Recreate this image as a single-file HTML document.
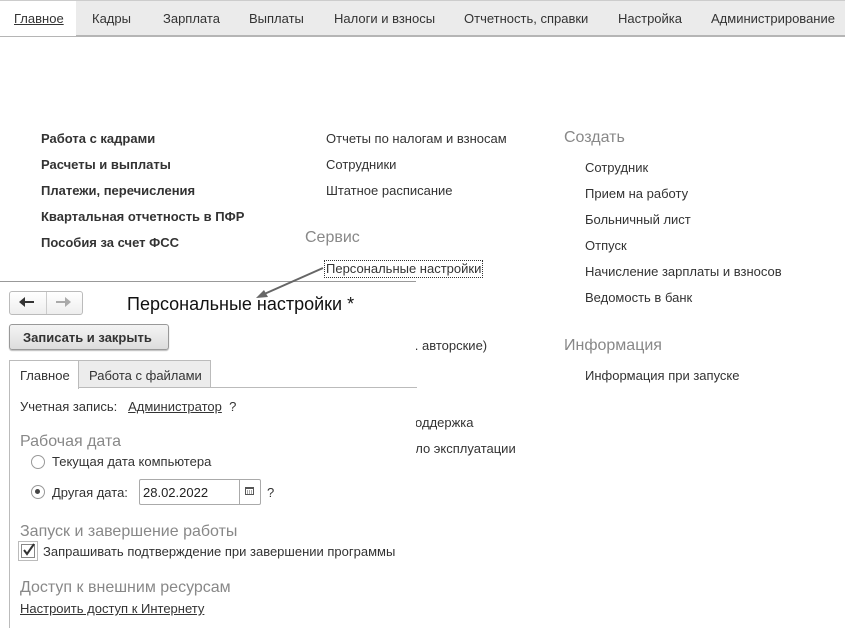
<!DOCTYPE html><html><head><meta charset="utf-8"><style>
body{margin:0;width:845px;height:627px;position:relative;background:#fff;font-family:"Liberation Sans",Arial,sans-serif;font-size:13px;color:#333;overflow:hidden}
.a{position:absolute;white-space:nowrap;line-height:16px;margin-top:1px}
.b{font-weight:bold;color:#333}
.h{font-size:16px;color:#888;line-height:20px}
.nav{position:absolute;left:0;top:0;width:845px;height:37px;background:#ebebeb;border-bottom:2px solid #b5b5b5;border-top:1px solid #ccc;box-sizing:border-box}
.nav span{position:absolute;top:10px;color:#333}
</style></head><body>
<div class="nav">
<div style="position:absolute;left:0;top:0;width:76px;height:35px;background:#fff"></div>
<span style="left:14px;text-decoration:underline">Главное</span>
<span style="left:92px">Кадры</span>
<span style="left:163px">Зарплата</span>
<span style="left:249px">Выплаты</span>
<span style="left:334px">Налоги и взносы</span>
<span style="left:464px">Отчетность, справки</span>
<span style="left:618px">Настройка</span>
<span style="left:711px">Администрирование</span>
</div>
<div class="a b" style="left:41px;top:130px">Работа с кадрами</div>
<div class="a b" style="left:41px;top:156px">Расчеты и выплаты</div>
<div class="a b" style="left:41px;top:182px">Платежи, перечисления</div>
<div class="a b" style="left:41px;top:208px">Квартальная отчетность в ПФР</div>
<div class="a b" style="left:41px;top:234px">Пособия за счет ФСС</div>
<div class="a" style="left:326px;top:130px">Отчеты по налогам и взносам</div>
<div class="a" style="left:326px;top:156px">Сотрудники</div>
<div class="a" style="left:326px;top:182px">Штатное расписание</div>
<div class="a h" style="left:305px;top:227px">Сервис</div>
<div class="a" style="left:324px;top:259px;border:1px dotted #333;padding:0 1px">Персональные настройки</div>
<div class="a" style="left:408px;top:337px">ч. авторские)</div>
<div class="a" style="left:408px;top:362px">я</div>
<div class="a" style="left:408px;top:414px">поддержка</div>
<div class="a" style="left:408px;top:440px">ало эксплуатации</div>
<div class="a h" style="left:564px;top:127px">Создать</div>
<div class="a" style="left:585px;top:159px">Сотрудник</div>
<div class="a" style="left:585px;top:185px">Прием на работу</div>
<div class="a" style="left:585px;top:211px">Больничный лист</div>
<div class="a" style="left:585px;top:237px">Отпуск</div>
<div class="a" style="left:585px;top:263px">Начисление зарплаты и взносов</div>
<div class="a" style="left:585px;top:289px">Ведомость в банк</div>
<div class="a h" style="left:564px;top:335px">Информация</div>
<div class="a" style="left:585px;top:367px">Информация при запуске</div>

<div style="position:absolute;left:0;top:281px;width:416px;height:346px;background:#fff;border-top:1px solid #999"></div>
<div style="position:absolute;left:9px;top:291px;width:72px;height:22px;border:1px solid #bbb;border-radius:3px;background:linear-gradient(#fff,#eee)"></div>
<div style="position:absolute;left:46px;top:292px;width:1px;height:22px;background:#ccc"></div>
<svg style="position:absolute;left:0;top:0" width="845" height="627"><path d="M23 302h11" stroke="#333" stroke-width="2"/><path d="M19 302l6-5v10z" fill="#333"/><path d="M56 302h11" stroke="#aaa" stroke-width="2"/><path d="M71 302l-6-5v10z" fill="#aaa"/></svg>
<div class="a" style="left:127px;top:292px;font-size:18px;line-height:22px;color:#111">Персональные настройки *</div>
<div style="position:absolute;left:9px;top:324px;width:158px;height:24px;border:1px solid #999;border-radius:3px;background:linear-gradient(#f4f4f4,#ddd);box-shadow:0 1px 1px #bbb"></div>
<div class="a b" style="left:23px;top:329px">Записать и закрыть</div>
<div style="position:absolute;left:78px;top:360px;width:131px;height:26px;background:#ececec;border:1px solid #bbb;border-bottom:none"></div>
<div style="position:absolute;left:9px;top:360px;width:68px;height:28px;background:#fff;border:1px solid #bbb;border-bottom:none;z-index:2"></div>
<div style="position:absolute;left:9px;top:387px;width:407px;height:240px;border-left:1px solid #bbb;border-top:1px solid #bbb"></div>
<div class="a" style="left:20px;top:367px;z-index:3">Главное</div>
<div class="a" style="left:89px;top:367px">Работа с файлами</div>
<div class="a" style="left:20px;top:398px">Учетная запись:&nbsp;&nbsp; <span style="text-decoration:underline">Администратор</span>&nbsp; ?</div>
<div class="a h" style="left:20px;top:431px">Рабочая дата</div>
<div style="position:absolute;left:31px;top:455px;width:12px;height:12px;border:1px solid #999;border-radius:50%"></div>
<div class="a" style="left:52px;top:453px">Текущая дата компьютера</div>
<div style="position:absolute;left:31px;top:485px;width:12px;height:12px;border:1px solid #999;border-radius:50%"></div>
<div style="position:absolute;left:35px;top:489px;width:5px;height:5px;background:#444;border-radius:50%"></div>
<div class="a" style="left:52px;top:484px">Другая дата:</div>
<div style="position:absolute;left:139px;top:479px;width:120px;height:24px;border:1px solid #aaa;border-radius:2px"></div>
<div style="position:absolute;left:239px;top:480px;width:1px;height:24px;background:#aaa"></div>
<div class="a" style="left:143px;top:484px;color:#222">28.02.2022</div>
<svg style="position:absolute;left:245px;top:486px" width="10" height="10"><rect x="0.5" y="1.5" width="8" height="7" fill="none" stroke="#555"/><rect x="0.5" y="1" width="8" height="2" fill="#555"/><path d="M2 5h1M4 5h1M6 5h1M2 7h1M4 7h1M6 7h1" stroke="#555"/></svg>
<div class="a" style="left:267px;top:484px">?</div>
<div class="a h" style="left:20px;top:521px">Запуск и завершение работы</div>
<div style="position:absolute;left:18px;top:541px;width:20px;height:20px;border:1px solid #bbb;box-sizing:border-box"></div>
<div style="position:absolute;left:21px;top:544px;width:14px;height:14px;border:1px solid #888;box-sizing:border-box;background:#fff"></div>
<svg style="position:absolute;left:21px;top:542px" width="16" height="16"><path d="M3 8l3 4 7-10" stroke="#333" stroke-width="2" fill="none"/></svg>
<div class="a" style="left:43px;top:543px">Запрашивать подтверждение при завершении программы</div>
<div class="a h" style="left:20px;top:577px">Доступ к внешним ресурсам</div>
<div class="a" style="left:20px;top:600px;text-decoration:underline">Настроить доступ к Интернету</div>
<svg style="position:absolute;left:0;top:0" width="845" height="627"><path d="M323 268L262 295" stroke="#666" stroke-width="2"/><path d="M256 298l12-1-4-7z" fill="#666"/></svg>
</body></html>
